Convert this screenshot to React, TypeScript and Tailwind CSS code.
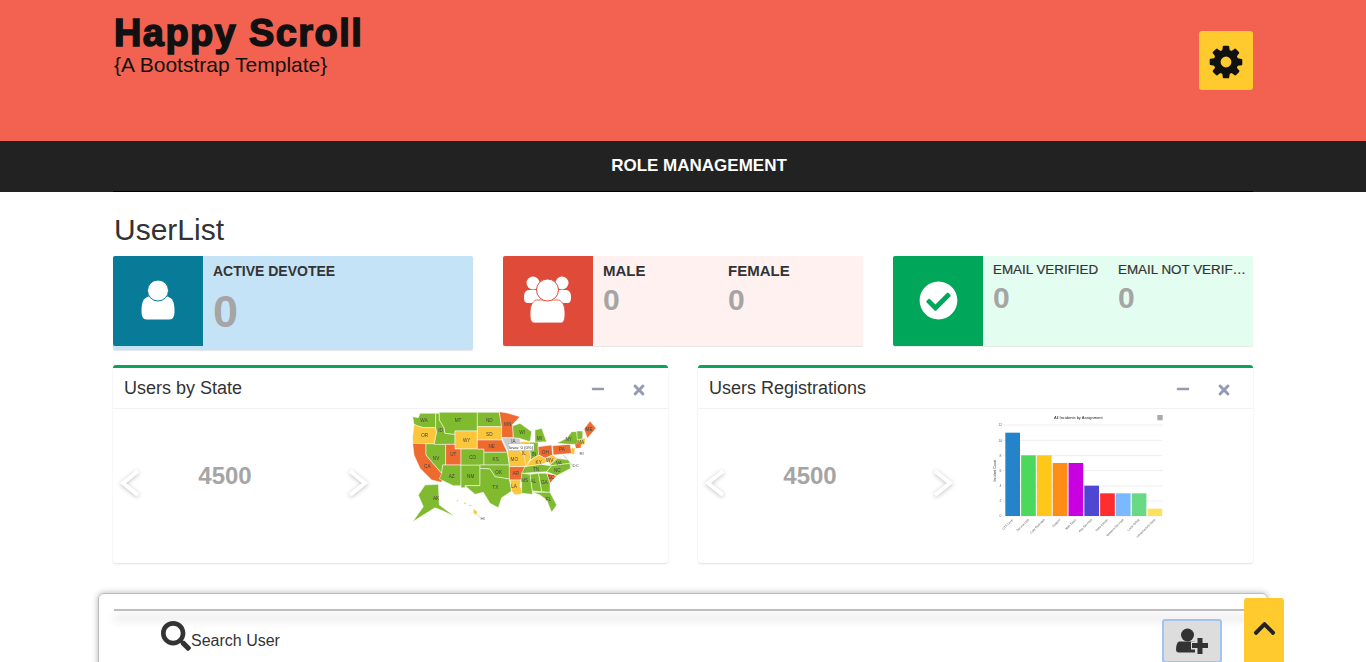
import { FaCheckCircle, FaChevronUp, FaMinus, FaSearch, FaTimes } from "react-icons/fa";

const GREEN = "#7fba2f";
const ORANGE = "#ee6a2f";
const YELLOW = "#fcc63c";

// rough state shapes, in a 630x390 box
const states: [string, string, string, number, number][] = [
  ["WA", "38,35 55,38 60,25 107,25 107,68 70,68 50,62 42,58", GREEN, 72, 52],
  ["OR", "42,58 50,62 70,68 107,68 110,80 103,118 38,115 38,95", YELLOW, 74, 95],
  ["CA", "38,115 78,116 78,150 125,205 130,212 125,232 95,225 60,190 42,150", ORANGE, 82, 190],
  ["NV", "78,116 137,118 137,180 128,180 125,205 78,150", GREEN, 108, 165],
  ["ID", "107,25 118,25 118,45 132,68 135,85 165,88 165,118 103,118 110,80 107,68", GREEN, 122, 82],
  ["MT", "118,22 232,22 232,78 165,78 165,88 135,85 132,68 118,45", GREEN, 174, 52],
  ["WY", "165,78 232,78 232,132 165,132", YELLOW, 200, 111],
  ["UT", "137,118 165,118 165,132 183,132 183,180 137,180", ORANGE, 160, 153],
  ["AZ", "128,180 183,180 183,242 160,242 118,222 125,205", GREEN, 155, 219],
  ["NM", "183,180 240,180 240,242 195,242 195,248 183,248", GREEN, 212, 219],
  ["CO", "183,132 252,132 252,180 183,180", GREEN, 218, 163],
  ["ND", "232,22 298,22 305,65 232,65", GREEN, 268, 50],
  ["SD", "232,65 305,65 305,105 232,105", YELLOW, 268, 93],
  ["NE", "232,105 305,105 322,142 252,142 252,132 232,132", ORANGE, 275, 129],
  ["KS", "252,142 322,142 328,180 252,180", GREEN, 287, 167],
  ["OK", "240,180 328,180 328,222 285,215 270,192 240,190", GREEN, 296, 206],
  ["TX", "240,190 270,192 285,215 328,222 335,258 305,278 295,308 270,295 250,262 225,268 195,242 240,242", GREEN, 286, 252],
  ["MN", "298,20 322,24 360,35 338,58 340,98 305,98 305,65", ORANGE, 323, 64],
  ["IA", "305,98 340,98 358,100 368,122 358,135 322,135", "#cccccc", 340, 115],
  ["MO", "322,135 358,135 372,150 390,178 375,185 328,185 328,180", YELLOW, 343, 169],
  ["AR", "328,185 375,185 362,225 330,225 328,222", ORANGE, 347, 211],
  ["LA", "330,225 362,225 360,245 375,265 345,270 335,258", YELLOW, 342, 249],
  ["WI", "340,62 360,55 395,80 390,110 358,100 340,98 338,58", GREEN, 366, 86],
  ["MI", "405,75 425,70 440,110 405,112", GREEN, 418, 104],
  ["IL", "360,110 388,110 392,160 378,185 372,150 358,135 368,122", YELLOW, 372, 151],
  ["IN", "388,112 414,112 416,150 392,165 392,160", GREEN, 402, 152],
  ["OH", "414,125 455,120 458,150 435,160 416,150", ORANGE, 436, 148],
  ["KY", "378,185 392,165 416,150 435,160 445,170 425,178", YELLOW, 416, 177],
  ["WV", "435,160 458,150 472,160 450,180 445,170", YELLOW, 449, 170],
  ["TN", "372,190 375,185 425,178 455,182 440,200 365,205", GREEN, 408, 199],
  ["VA", "425,178 450,180 472,160 505,165 510,175 455,182", GREEN, 477, 179],
  ["NC", "440,200 455,182 510,175 512,190 470,212", GREEN, 472, 201],
  ["SC", "440,205 470,212 450,235", ORANGE, 453, 222],
  ["GA", "415,205 440,205 450,235 450,262 425,260", GREEN, 433, 236],
  ["AL", "390,208 415,205 425,260 398,258 398,268", GREEN, 400, 233],
  ["MS", "365,205 390,208 398,268 365,265", GREEN, 374, 232],
  ["FL", "398,262 450,262 470,300 455,322 440,285 420,270", GREEN, 445, 288],
  ["PA", "458,122 510,118 515,145 460,150", ORANGE, 486, 138],
  ["NY", "470,115 500,100 515,80 530,80 535,118 510,118", GREEN, 506, 109],
  ["ME", "552,72 570,48 588,70 562,100", ORANGE, 567, 78],
  ["VT", "530,78 548,78 548,105 532,105", GREEN, 0, 0],
  ["MA", "533,105 555,98 555,118 530,125", YELLOW, 542, 116],
  ["AK", "75,240 115,238 118,300 165,335 130,318 105,308 70,330 38,350 70,305 55,270", GREEN, 108, 285],
  ["HI", "220,310 232,320 230,330 220,325", YELLOW, 0, 0],
];

function UsMap() {
  return (
    <svg viewBox="0 0 630 390" className="w-[210px] h-[130px] blur-[0.3px]" aria-hidden="true">
      {states.map(([name, points, fill, x, y]) => (
        <g key={name}>
          <polygon points={points} fill={fill} stroke="#fff" strokeWidth="1.5" strokeLinejoin="round" />
          {x > 0 && (
            <text x={x} y={y} fontSize="14" fill="#444" textAnchor="middle" fontFamily="Liberation Sans, sans-serif">
              {name}
            </text>
          )}
        </g>
      ))}
      <polygon points="525,118 542,115 542,128 528,130" fill={ORANGE} />
      <polygon points="515,130 525,130 522,148 514,146" fill={YELLOW} />
      <line x1="490" y1="150" x2="520" y2="185" stroke="#777" />
      <text x="527" y="187" fontSize="13" fill="#555" textAnchor="middle" fontFamily="Liberation Sans, sans-serif">DC</text>
      <text x="545" y="150" fontSize="13" fill="#555" textAnchor="middle" fontFamily="Liberation Sans, sans-serif">RI</text>
      <rect x="170" y="286" width="5" height="3" fill={YELLOW} />
      <rect x="192" y="293" width="6" height="3" fill={YELLOW} />
      <rect x="208" y="300" width="6" height="3" fill={YELLOW} />
      <line x1="232" y1="328" x2="240" y2="338" stroke="#888" />
      <text x="248" y="345" fontSize="13" fill="#555" textAnchor="middle" fontFamily="Liberation Sans, sans-serif">HI</text>
      <rect x="325" y="116" width="77" height="21" fill="#fff" stroke="#999" />
      <text x="363" y="131" fontSize="13" fill="#333" textAnchor="middle" fontFamily="Liberation Sans, sans-serif">Iowa: 0 (0%)</text>
    </svg>
  );
}

const bars = [
  { h: 250, c: "#2583c9", label: "CTS Level" },
  { h: 182, c: "#4cd85c", label: "Service Ops" },
  { h: 182, c: "#ffc719", label: "Core Business" },
  { h: 159, c: "#ff8c17", label: "Support" },
  { h: 159, c: "#c900e0", label: "Web Team" },
  { h: 91, c: "#4d47d1", label: "App Services" },
  { h: 68, c: "#ff2d2d", label: "Data Center" },
  { h: 68, c: "#7ab8ff", label: "Network Services" },
  { h: 68, c: "#69d985", label: "Local Office" },
  { h: 22, c: "#ffe05c", label: "Infrastructure Desk" },
];

function BarChart() {
  return (
    <svg viewBox="0 0 600 405" className="w-[200px] h-[135px] blur-[0.3px]" aria-hidden="true">
      <text x="295" y="41" fontSize="12" fill="#222" textAnchor="middle" fontFamily="Liberation Sans, sans-serif">
        All Incidents by Assignment
      </text>
      <rect x="532" y="30" width="16" height="16" fill="#aaa" />
      {[60, 106, 152, 197, 243, 288, 333].map((y, i) => (
        <g key={y}>
          <line x1="68" x2="548" y1={y} y2={y} stroke="#eee" strokeWidth="3" />
          <text x="61" y={y + 4} fontSize="10" fill="#666" textAnchor="middle" fontFamily="Liberation Sans, sans-serif">
            {12 - i * 2}
          </text>
        </g>
      ))}
      <text x="0" y="0" fontSize="10" fill="#333" textAnchor="middle" transform="translate(48 197) rotate(-90)" fontFamily="Liberation Sans, sans-serif">
        Incident Count
      </text>
      {bars.map((b, i) => (
        <g key={b.label}>
          <rect x={76 + i * 47.4} y={333 - b.h} width="44" height={b.h} fill={b.c} />
          <text
            x="0"
            y="0"
            fontSize="9"
            fill="#555"
            textAnchor="end"
            transform={`translate(${100 + i * 47.4} 345) rotate(-45)`}
            fontFamily="Liberation Sans, sans-serif"
          >
            {b.label}
          </text>
        </g>
      ))}
    </svg>
  );
}

function CogIcon() {
  return (
    <svg width="38" height="38" viewBox="0 0 1792 1792" fill="#111" aria-hidden="true">
      <path d="M1152 896q0-106-75-181t-181-75-181 75-75 181 75 181 181 75 181-75 75-181zm512-109v222q0 12-8 23t-20 13l-185 28q-19 54-39 91 35 50 107 138 10 12 10 25t-9 23q-27 37-99 108t-94 71q-12 0-26-9l-138-108q-44 23-91 38-16 136-29 186-7 28-36 28h-222q-14 0-24.500-8.500t-11.500-21.500l-28-184q-49-16-90-37l-141 107q-10 9-25 9-14 0-25-11-126-114-165-168-7-10-7-23 0-12 8-23 15-21 51-66.500t54-70.500q-27-50-41-99l-183-27q-13-2-21-12.500t-8-23.500v-222q0-12 8-23t19-13l186-28q14-46 39-92-40-57-107-138-10-12-10-24 0-10 9-23 26-36 98.500-107.500t94.500-71.500q13 0 26 10l138 107q44-23 91-38 16-136 29-186 7-28 36-28h222q14 0 24.500 8.500t11.500 21.500l28 184q49 16 90 37l142-107q9-9 24-9 13 0 25 10 129 119 165 170 7 8 7 22 0 12-8 23-15 21-51 66.500t-54 70.500q26 50 41 98l183 28q13 2 21 12.500t8 23.500z" />
    </svg>
  );
}

function UserIcon() {
  return (
    <svg width="34" height="40" viewBox="0 0 34 40" fill="#fff" aria-hidden="true">
      <path d="M0.500 31c0-9 2-13 7-14.500h19c5 1.500 7 5.500 7 14.500 0 5.500-1.500 8.500-5 8.500H5.500c-3.500 0-5-3-5-8.500z" />
      <circle cx="17" cy="10.500" r="10.500" stroke="#087b98" strokeWidth="1" />
    </svg>
  );
}

function GroupIcon() {
  return (
    <svg width="50" height="48" viewBox="0 0 50 48" fill="#fff" aria-hidden="true">
      <circle cx="10" cy="7" r="6.500" />
      <circle cx="39" cy="7" r="6.500" />
      <path d="M1 22c0-5 1-7 4-8h39c3 1 4 3 4 8 0 3-1 5-3.500 5h-39C2 27 1 25 1 22z" />
      <path d="M7 38c0-8 2-12 6-14h23c4 2 6 6 6 14 0 6-1.500 9-4.500 9h-26C8.500 47 7 44 7 38z" stroke="#df4b38" strokeWidth="0.8" />
      <circle cx="24.500" cy="14" r="11" stroke="#df4b38" strokeWidth="1" />
    </svg>
  );
}

function UserPlusIcon() {
  return (
    <svg width="32" height="26" viewBox="0 0 32 26" fill="#333" aria-hidden="true">
      <circle cx="11.500" cy="7" r="6.500" />
      <path d="M3 13.500h16v11H3c-2 0-3-1-3-3 0-4 1-7 3-8z" />
      <rect x="15" y="13.500" width="17" height="8" fill="#ddd" />
      <rect x="20" y="9" width="8" height="17" fill="#ddd" />
      <rect x="16" y="15" width="16" height="5" />
      <rect x="21.500" y="10" width="5" height="16" />
    </svg>
  );
}

function Chevron({ right }: { right?: boolean }) {
  return (
    <svg
      width="24"
      height="30"
      viewBox="0 0 24 30"
      className="drop-shadow-[0_1px_2px_rgba(0,0,0,0.25)]"
      aria-hidden="true"
    >
      <path
        d={right ? "M5 3l15 12L5 27" : "M19 3L4 15l15 12"}
        fill="none"
        stroke="#fff"
        strokeWidth="4"
      />
    </svg>
  );
}

function Panel({ title, children }: { title: string; children: React.ReactNode }) {
  return (
    <div className="w-[555px] h-[198px] bg-white border-t-[3px] border-[#0aa35b] rounded-[3px] shadow-[0_1px_2px_rgba(0,0,0,0.13)]">
      <div className="h-[41px] flex items-center pl-[11px] border-b border-[#f2f2f2]">
        <h3 className="text-[18px] text-[#333] flex-1 pt-[1px]">{title}</h3>
        <FaMinus className="text-[#949ab2] text-[14px] mt-[2px] mr-[26px]" />
        <FaTimes className="text-[#949ab2] text-[16px] mt-[3px] mr-[21px]" />
      </div>
      <div className="flex items-start h-[153px]">
        <div className="w-[222px] h-full relative pt-[49px] text-center">
          <span className="text-[24px] font-bold text-[#a5a5a5] pl-[2px]">4500</span>
          <span className="absolute left-[6px] top-[59px]">
            <Chevron />
          </span>
          <span className="absolute right-[-34px] top-[59px]">
            <Chevron right />
          </span>
        </div>
        {children}
      </div>
    </div>
  );
}

export default function App() {
  return (
    <div className="h-screen overflow-hidden bg-white font-['Liberation_Sans',sans-serif] relative">
      {/* Header */}
      <header className="h-[141px] bg-[#f36251]">
        <div className="w-[1140px] mx-auto flex justify-between">
          <div className="pt-[13px] pl-[1px]">
            <h1 className="text-[38px] leading-[40px] font-bold text-[#111] tracking-[1.4px] [-webkit-text-stroke:1.5px_#111]">
              Happy Scroll
            </h1>
            <p className="text-[21px] leading-[24px] text-[#111]">{"{A Bootstrap Template}"}</p>
          </div>
          <button className="mt-[31px] w-[54px] h-[59px] bg-[#ffca2e] rounded-[3px] flex items-center justify-center pt-[2px]">
            <CogIcon />
          </button>
        </div>
      </header>

      {/* Nav */}
      <nav className="h-[51px] bg-[#222]">
        <div className="w-[1140px] h-full mx-auto flex items-center justify-center border-b border-black">
          <span className="text-white font-bold text-[17px] pl-[32px]">ROLE MANAGEMENT</span>
        </div>
      </nav>

      <main className="w-[1140px] mx-auto">
        <h2 className="text-[30px] leading-[33px] text-[#333] mt-[21px] mb-[10px] pl-[1px]">UserList</h2>

        {/* Stat cards */}
        <div className="flex justify-between h-[94px]">
          <div className="w-[360px] h-[94px] flex items-start bg-[#c5e3f6] rounded-[2px] shadow-[0_1px_1px_rgba(0,0,0,0.1)]">
            <div className="w-[90px] h-[90px] bg-[#087b98] flex items-center justify-center rounded-l-[2px] shrink-0 pb-[2px]">
              <UserIcon />
            </div>
            <div className="pl-[10px] pt-[7px]">
              <div className="text-[14px] leading-[16px] font-bold text-[#333]">ACTIVE DEVOTEE</div>
              <div className="text-[45px] leading-[50px] font-bold text-[#a5a5a5] mt-[8px]">0</div>
            </div>
          </div>

          <div className="w-[360px] h-[90px] flex bg-[#fff1f0] rounded-[2px] shadow-[0_1px_1px_rgba(0,0,0,0.1)]">
            <div className="w-[90px] h-[90px] bg-[#df4b38] flex items-center justify-center rounded-l-[2px] shrink-0 pb-[2px]">
              <GroupIcon />
            </div>
            <div className="grid grid-cols-[125px_125px] pl-[10px] pt-[6px]">
              <div>
                <div className="text-[15px] leading-[17px] font-bold text-[#333]">MALE</div>
                <div className="text-[30px] leading-[34px] font-bold text-[#a5a5a5] mt-[4px]">0</div>
              </div>
              <div>
                <div className="text-[15px] leading-[17px] font-bold text-[#333]">FEMALE</div>
                <div className="text-[30px] leading-[34px] font-bold text-[#a5a5a5] mt-[4px]">0</div>
              </div>
            </div>
          </div>

          <div className="w-[360px] h-[90px] flex bg-[#e4fdf1] rounded-[2px] shadow-[0_1px_1px_rgba(0,0,0,0.1)]">
            <div className="w-[90px] h-[90px] bg-[#00a65a] flex items-center justify-center rounded-l-[2px] shrink-0 pb-[2px]">
              <FaCheckCircle className="text-[39px] text-white" />
            </div>
            <div className="grid grid-cols-[125px_130px] pl-[10px] pt-[6px]">
              <div>
                <div className="text-[13.4px] leading-[16px] text-[#333] [-webkit-text-stroke:0.2px_#333] truncate">EMAIL VERIFIED</div>
                <div className="text-[30px] leading-[34px] font-bold text-[#a5a5a5] mt-[3px]">0</div>
              </div>
              <div>
                <div className="text-[13.4px] leading-[16px] text-[#333] [-webkit-text-stroke:0.2px_#333] truncate">EMAIL NOT VERIFIED</div>
                <div className="text-[30px] leading-[34px] font-bold text-[#a5a5a5] mt-[3px]">0</div>
              </div>
            </div>
          </div>
        </div>

        {/* Chart panels */}
        <div className="flex justify-between mt-[15px]">
          <Panel title="Users by State">
            <div className="pl-[65px] -mt-[4px]">
              <UsMap />
            </div>
          </Panel>
          <Panel title="Users Registrations">
            <div className="pl-[60px] -mt-[4px]">
              <BarChart />
            </div>
          </Panel>
        </div>
      </main>

      {/* Search panel */}
      <section className="w-[1170px] h-[100px] mx-auto mt-[30px] border border-[#bbb] rounded-[6px] shadow-[0_0_6px_rgba(0,0,0,0.3)]">
        <div className="mx-[15px] mt-[15px] h-[2px] bg-[#bdbdbd] shadow-[0_8px_10px_rgba(0,0,0,0.28)]" />
        <div className="flex justify-between pl-[62px] pr-[45px] pt-[8px]">
          <div className="flex items-start">
            <FaSearch className="text-[30px] text-[#333] mt-[2px]" />
            <span className="text-[16px] leading-[24px] text-[#333] mt-[10px]">Search User</span>
          </div>
          <button className="w-[60px] h-[44px] bg-[#ddd] border-2 border-[#a3c2f0] rounded-[3px] flex items-center justify-center">
            <UserPlusIcon />
          </button>
        </div>
      </section>

      {/* Scroll to top */}
      <button className="absolute left-[1244px] top-[598px] w-[40px] h-[64px] bg-[#ffca2e] rounded-t-[3px] flex justify-center pt-[18px]">
        <FaChevronUp className="text-[25px] text-[#222]" />
      </button>
    </div>
  );
}
